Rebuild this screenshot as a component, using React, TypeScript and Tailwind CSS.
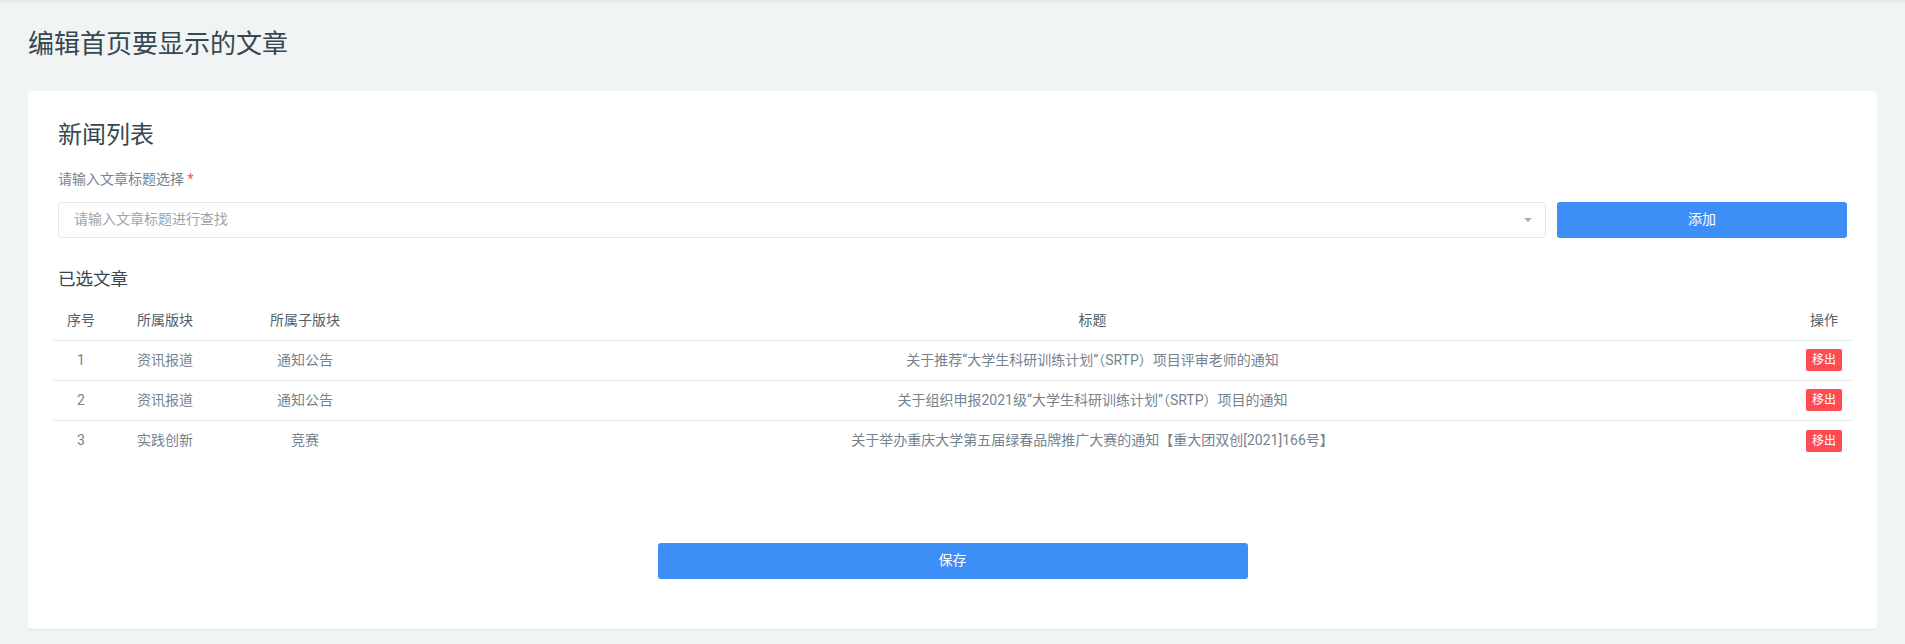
import React from "react";

const rows = [
  { id: 1, block: "资讯报道", sub: "通知公告", title: "关于推荐“大学生科研训练计划”（SRTP）项目评审老师的通知" },
  { id: 2, block: "资讯报道", sub: "通知公告", title: "关于组织申报2021级“大学生科研训练计划”（SRTP）项目的通知" },
  { id: 3, block: "实践创新", sub: "竞赛", title: "关于举办重庆大学第五届绿春品牌推广大赛的通知【重大团双创[2021]166号】" },
];

const cols = "grid grid-cols-[56px_112px_168px_1fr_56px] items-center h-[40px]";

export default function App() {
  return (
    <div className="min-h-[644px] bg-[#f1f4f5] font-['Roboto','Noto_Sans_CJK_SC',sans-serif]">
      <div className="h-[4px] bg-gradient-to-b from-[#e1e5e7] to-[#f1f4f5]" />
      <div className="px-[28px] pb-[15px]">
        <h1 className="mt-[25px] text-[26px] leading-[1.2] text-[#37474f]">编辑首页要显示的文章</h1>

        <div className="mt-[31px] rounded-[4px] bg-white px-[30px] pt-[30px] pb-[50px] shadow-[0_1px_1px_rgba(0,0,0,0.06)]">
          <h2 className="text-[24px] leading-[1.2] text-[#37474f]">新闻列表</h2>
          <div className="mt-[19px] text-[14px] leading-[20px] text-[#76838f]">
            请输入文章标题选择 <span className="text-[#ff4c52]">*</span>
          </div>

          <div className="mt-[13px] flex gap-[11px]">
            <div className="flex h-[36px] flex-1 items-center justify-between rounded-[3px] border border-[#e4eaec] pl-[15px] pr-[13px]">
              <span className="text-[14px] text-[#9aa5ad]">请输入文章标题进行查找</span>
              <span className="h-0 w-0 border-x-[4px] border-t-[4px] border-x-transparent border-t-[#a3afb7]" />
            </div>
            <button className="h-[36px] w-[290px] rounded-[3px] bg-[#3e8ef7] text-[14px] text-white">添加</button>
          </div>

          <h3 className="mt-[31px] text-[17.5px] leading-[21px] text-[#37474f]">已选文章</h3>

          <div className="-mx-[5px] mt-[11px] text-[14px]">
            <div className={`${cols} border-b border-[#e4eaec] text-[#526069]`}>
              <div className="text-center">序号</div>
              <div className="text-center">所属版块</div>
              <div className="text-center">所属子版块</div>
              <div className="text-center">标题</div>
              <div className="text-center">操作</div>
            </div>
            {rows.map((r, i) => (
              <div
                key={r.id}
                className={`${cols} text-[#76838f] ${i < rows.length - 1 ? "border-b border-[#e4eaec]" : ""}`}
              >
                <div className="text-center">{r.id}</div>
                <div className="text-center">{r.block}</div>
                <div className="text-center">{r.sub}</div>
                <div className="text-center">{r.title}</div>
                <div className="flex justify-center">
                  <button className="h-[22px] w-[36px] rounded-[2px] bg-[#ff4c52] text-[12px] text-white">移出</button>
                </div>
              </div>
            ))}
          </div>

          <button className="mx-auto mt-[82px] block h-[36px] w-[590px] rounded-[3px] bg-[#3e8ef7] text-[14px] text-white">
            保存
          </button>
        </div>
      </div>
    </div>
  );
}
